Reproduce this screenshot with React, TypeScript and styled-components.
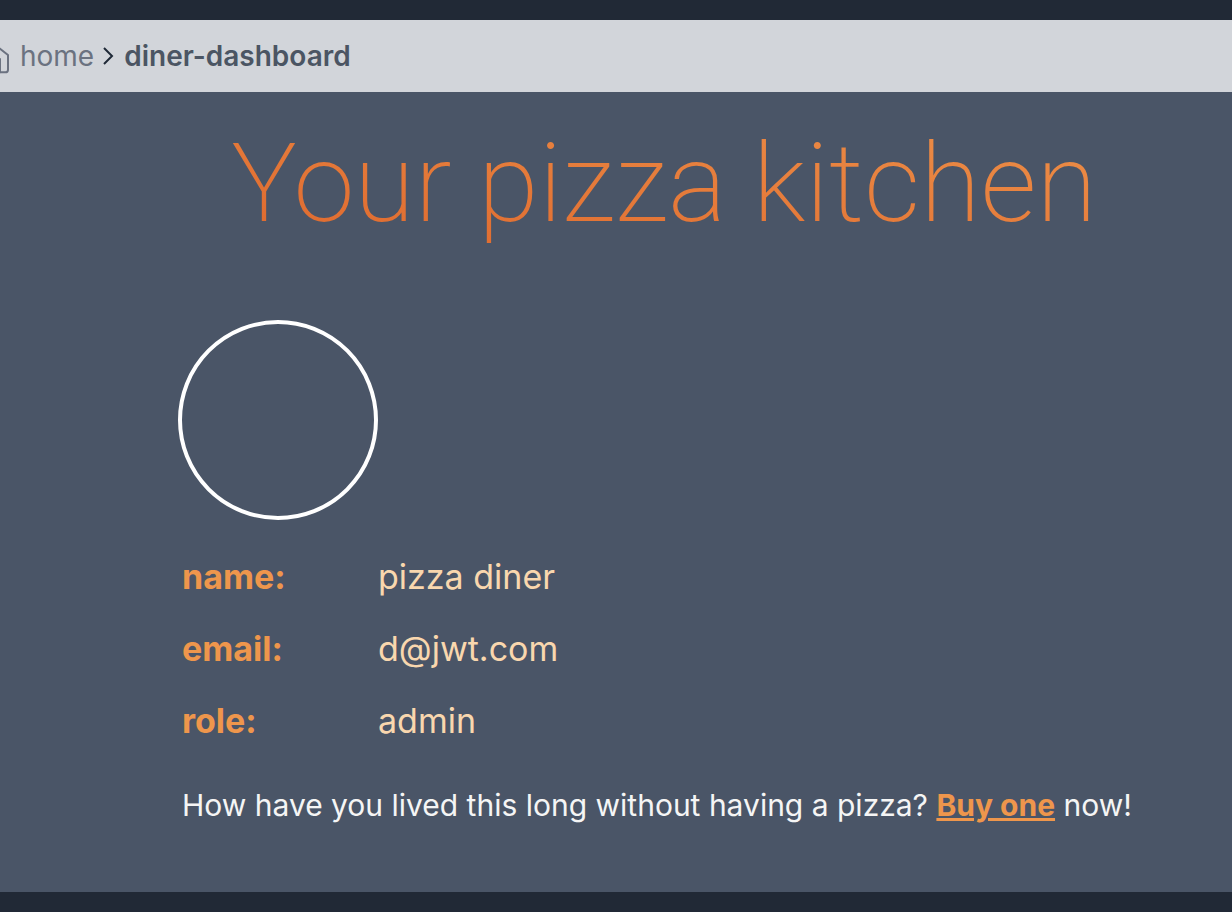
import React from "react";
import styled, { createGlobalStyle } from "styled-components";

const Global = createGlobalStyle`
  * { box-sizing: border-box; }
  html { background: #212936; }
  body { margin: 0; font-family: Inter, "Liberation Sans", sans-serif; overflow-x: hidden; }
`;

const Page = styled.div`
  min-height: 100vh;
  display: flex;
  flex-direction: column;
  padding: 20px 0;
  background: #212936;
`;

const Breadcrumb = styled.nav`
  display: flex;
  align-items: center;
  height: 72px;
  background: #d2d5da;
  color: #6b7280;
  font-size: 28px;
  line-height: 40px;
  overflow: hidden;
`;

const HomeIcon = styled.svg`
  flex: none;
  width: 32px;
  height: 32px;
  margin: 6px 0 0 -20px;
`;

const HomeLink = styled.a`
  margin-left: 8px;
  color: #6b7280;
  text-decoration: none;
`;

const Chevron = styled.svg`
  flex: none;
  width: 12px;
  height: 20px;
  margin: 0 9px;
`;

const Current = styled.span`
  color: #4b5563;
  font-weight: 600;
`;

const Main = styled.main`
  flex: 1;
  background: #4a5567;
  color: #f5f5f5;
`;

const Title = styled.h1`
  margin: 0;
  padding: 20px 0 24px 96px;
  font-family: Roboto, Inter, sans-serif;
  font-size: 110px;
  line-height: 144px;
  font-weight: 200;
  text-align: center;
  color: transparent;
  background: linear-gradient(to top right, #da5d26, #f0984e);
  background-clip: text;
  -webkit-background-clip: text;
`;

const Content = styled.section`
  padding: 40px 40px 60px 178px;
`;

const Avatar = styled.div`
  width: 200px;
  height: 200px;
  border: 4px solid #ffffff;
  border-radius: 50%;
`;

const Details = styled.dl`
  display: grid;
  grid-template-columns: 196px 1fr;
  row-gap: 16px;
  margin: 29px 0 0 4px;
  font-size: 34px;
  line-height: 56px;
`;

const Term = styled.dt`
  color: #ee964c;
  font-weight: 700;
`;

const Value = styled.dd`
  margin: 0;
  color: #f9d7ae;
`;

const Prompt = styled.p`
  margin: 32px 0 0 4px;
  font-size: 30px;
  line-height: 48px;
`;

const BuyLink = styled.a`
  color: #ee964c;
  font-weight: 700;
  text-decoration-thickness: 3px;
`;

const details = [
  ["name:", "pizza diner"],
  ["email:", "d@jwt.com"],
  ["role:", "admin"],
];

export default function App() {
  return (
    <Page>
      <Global />
      <Breadcrumb aria-label="Breadcrumb">
        <HomeIcon
          viewBox="0 0 24 24"
          fill="none"
          stroke="#6b7280"
          strokeWidth="1.5"
          strokeLinecap="round"
          strokeLinejoin="round"
          aria-hidden="true"
        >
          <path d="m3 9 9-7 9 7v11a2 2 0 0 1-2 2H5a2 2 0 0 1-2-2z" />
          <path d="M9 22V12h6v10" />
        </HomeIcon>
        <HomeLink href="#home">home</HomeLink>
        <Chevron viewBox="0 0 12 20" fill="none" stroke="#1f2937" strokeWidth="2" aria-hidden="true">
          <path d="m1 2 8 8-8 8" />
        </Chevron>
        <Current aria-current="page">diner-dashboard</Current>
      </Breadcrumb>
      <Main>
        <Title>Your pizza kitchen</Title>
        <Content>
          <Avatar />
          <Details>
            {details.map(([term, value]) => (
              <React.Fragment key={term}>
                <Term>{term}</Term>
                <Value>{value}</Value>
              </React.Fragment>
            ))}
          </Details>
          <Prompt>
            How have you lived this long without having a pizza? <BuyLink href="#menu">Buy one</BuyLink> now!
          </Prompt>
        </Content>
      </Main>
    </Page>
  );
}
